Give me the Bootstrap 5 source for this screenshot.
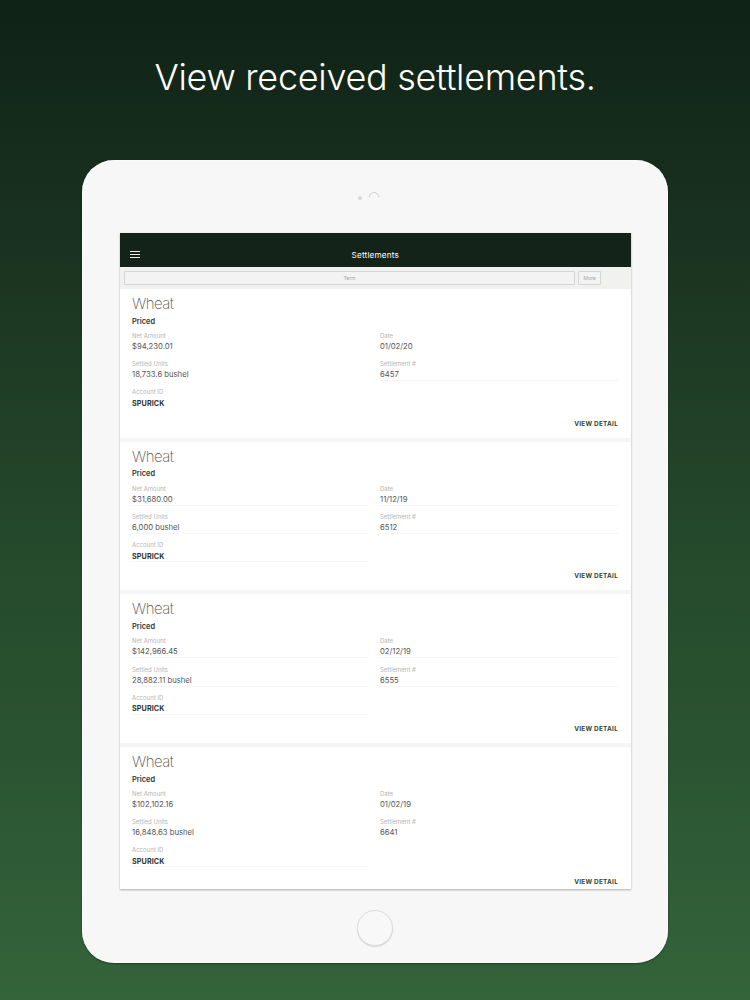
<!DOCTYPE html>
<html lang="en">
<head>
<meta charset="utf-8">
<title>Settlements</title>
<link href="https://cdn.jsdelivr.net/npm/bootstrap@5.3.0/dist/css/bootstrap.min.css" rel="stylesheet">
<style>
html,body{height:1000px;overflow:hidden}
body{background:linear-gradient(180deg,#0f2216 0%,#1a3320 25%,#23462a 50%,#2a5431 75%,#34643a 100%);font-family:"Inter","Liberation Sans",sans-serif;color:#333}
.headline{font-family:"Inter","Liberation Sans",sans-serif;font-weight:300;font-size:36px;line-height:44px;letter-spacing:-.3px;color:#fff;padding-top:55px;height:160px;margin:0}
.tablet{width:586px;height:803px;margin-left:82px;background:#f7f7f8;border-radius:32px;box-shadow:inset 0 0 3px #fff,0 1px 2px rgba(0,0,0,.35);padding-top:32px}
.cam-row{height:41px;padding-right:12px;gap:6px}
.cam-dot{width:4px;height:4px;background:#d9d9db;border-radius:50%;margin-top:4px}
.cam-arc{width:12px;height:6px}
.screen{width:511.5px;height:656px;margin-left:37.5px;background:#f5f5f5;box-shadow:0 1px 2px rgba(0,0,0,.3);overflow:hidden}
.top-bar{height:34px;background:#14231a;color:#fff;font-size:8.2px;font-weight:400;padding:16px 10px 0;position:relative;letter-spacing:.15px}
.top-title{line-height:12px}
.burger{left:10px;top:18px;position:absolute;width:10px;height:7px;border-top:1px solid #eee;border-bottom:1px solid #eee}
.burger::before{content:"";display:block;height:1px;background:#eee;margin-top:2px}
.tool-bar{height:22px;background:#f1f1ef;padding:4px 30px 3px 4.5px;gap:3px}
.term-box,.more-box{height:14px;border:1px solid #d3d6d6;border-radius:1px;background:#f2f3f2;font-size:5px;color:#a5a5a5;line-height:12px;text-align:center}
.term-box{width:451px}
.more-box{width:23px}
.entry{height:148.7px;background:#fff;margin-bottom:4px;padding:6px 13px 0 12.5px;position:relative}
.crop{font-weight:200;font-size:15px;line-height:18px;color:#555;letter-spacing:-.5px;margin:0}
.state{font-size:7.4px;font-weight:600;color:#333;line-height:10px;margin:3.6px 0 5.4px}
.field{height:21px;margin-bottom:7.2px;border-bottom:1px solid transparent}
.rule{border-bottom-color:#f6f6f6}
.lab{font-size:6px;color:#b5b5b5;line-height:8px;height:9px}
.val{font-size:7.7px;color:#555;line-height:12px}
.strong-val{font-size:7.2px;font-weight:700;color:#333;letter-spacing:.1px;margin-top:.5px}
.col-left{width:248px;padding-right:12px}
.more-link{position:absolute;right:13px;bottom:10px;font-size:6.4px;font-weight:700;color:#2f4535;letter-spacing:.25px;line-height:8px}
.home{width:36px;height:36px;margin:21px 0 0 275px;border-radius:50%;border:1px solid #dcdcdc;box-shadow:0 1px 1px rgba(0,0,0,.12);background:#f8f8f9}
</style>
</head>
<body>
<h1 class="headline text-center">View received settlements.</h1>
<div class="tablet">
  <div class="cam-row d-flex justify-content-center align-items-start">
    <span class="cam-dot"></span>
    <svg class="cam-arc" viewBox="0 0 12 6"><path d="M1 5.5A5 5 0 0 1 11 5.5" fill="none" stroke="#d0d0d2" stroke-width="1"/></svg>
  </div>
  <div class="screen">
    <div class="top-bar text-center"><span class="burger"></span><div class="top-title">Settlements</div></div>
    <div class="tool-bar d-flex"><div class="term-box">Term</div><div class="more-box">More</div></div>

    <div class="entry">
      <p class="crop">Wheat</p><div class="state">Priced</div>
      <div class="d-flex"><div class="col-left">
        <div class="field"><div class="lab">Net Amount</div><div class="val">$94,230.01</div></div>
        <div class="field"><div class="lab">Settled Units</div><div class="val">18,733.6 bushel</div></div>
        <div class="field"><div class="lab">Account ID</div><div class="val strong-val">SPURICK</div></div>
      </div><div class="flex-grow-1">
        <div class="field"><div class="lab">Date</div><div class="val">01/02/20</div></div>
        <div class="field rule"><div class="lab">Settlement #</div><div class="val">6457</div></div>
      </div></div>
      <div class="more-link">VIEW DETAIL</div>
    </div>

    <div class="entry">
      <p class="crop">Wheat</p><div class="state">Priced</div>
      <div class="d-flex"><div class="col-left">
        <div class="field rule"><div class="lab">Net Amount</div><div class="val">$31,680.00</div></div>
        <div class="field rule"><div class="lab">Settled Units</div><div class="val">6,000 bushel</div></div>
        <div class="field rule"><div class="lab">Account ID</div><div class="val strong-val">SPURICK</div></div>
      </div><div class="flex-grow-1">
        <div class="field rule"><div class="lab">Date</div><div class="val">11/12/19</div></div>
        <div class="field rule"><div class="lab">Settlement #</div><div class="val">6512</div></div>
      </div></div>
      <div class="more-link">VIEW DETAIL</div>
    </div>

    <div class="entry">
      <p class="crop">Wheat</p><div class="state">Priced</div>
      <div class="d-flex"><div class="col-left">
        <div class="field rule"><div class="lab">Net Amount</div><div class="val">$142,966.45</div></div>
        <div class="field rule"><div class="lab">Settled Units</div><div class="val">28,882.11 bushel</div></div>
        <div class="field rule"><div class="lab">Account ID</div><div class="val strong-val">SPURICK</div></div>
      </div><div class="flex-grow-1">
        <div class="field rule"><div class="lab">Date</div><div class="val">02/12/19</div></div>
        <div class="field rule"><div class="lab">Settlement #</div><div class="val">6555</div></div>
      </div></div>
      <div class="more-link">VIEW DETAIL</div>
    </div>

    <div class="entry">
      <p class="crop">Wheat</p><div class="state">Priced</div>
      <div class="d-flex"><div class="col-left">
        <div class="field"><div class="lab">Net Amount</div><div class="val">$102,102.16</div></div>
        <div class="field"><div class="lab">Settled Units</div><div class="val">16,848.63 bushel</div></div>
        <div class="field rule"><div class="lab">Account ID</div><div class="val strong-val">SPURICK</div></div>
      </div><div class="flex-grow-1">
        <div class="field"><div class="lab">Date</div><div class="val">01/02/19</div></div>
        <div class="field"><div class="lab">Settlement #</div><div class="val">6641</div></div>
      </div></div>
      <div class="more-link">VIEW DETAIL</div>
    </div>
  </div>
  <div class="home"></div>
</div>
<script src="https://cdn.jsdelivr.net/npm/bootstrap@5.3.0/dist/js/bootstrap.bundle.min.js"></script>
</body>
</html>
